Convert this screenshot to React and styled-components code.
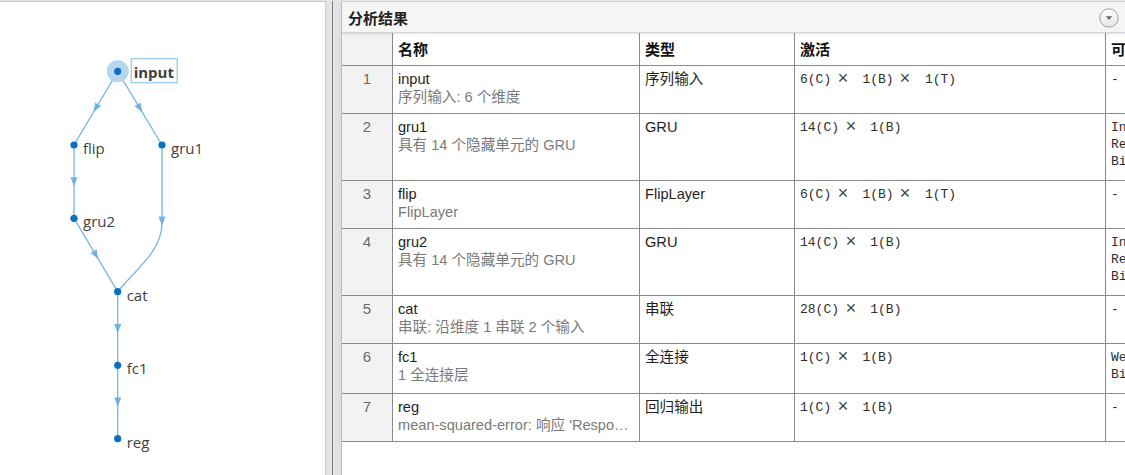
import React from 'react'
import styled, { createGlobalStyle } from 'styled-components'

const GlobalStyle = createGlobalStyle`
  html, body {
    margin: 0;
    padding: 0;
  }
  body {
    background: #e4e4e4;
    font-family: 'Liberation Sans', 'Noto Sans CJK SC', sans-serif;
  }
`

const nodes = [
  { id: 'input', x: 117.7, y: 70.3, selected: true },
  { id: 'flip', x: 74, y: 144 },
  { id: 'gru1', x: 162, y: 144 },
  { id: 'gru2', x: 74, y: 217.3 },
  { id: 'cat', x: 117.7, y: 290.7 },
  { id: 'fc1', x: 117.7, y: 364.3 },
  { id: 'reg', x: 117.7, y: 437.7 }
]

const pos = Object.fromEntries(nodes.map((n) => [n.id, n]))

const straight = (a, b) => {
  const p = pos[a]
  const q = pos[b]
  return {
    d: `M${p.x},${p.y} L${q.x},${q.y}`,
    ax: (p.x + q.x) / 2,
    ay: (p.y + q.y) / 2,
    angle: (Math.atan2(q.y - p.y, q.x - p.x) * 180) / Math.PI
  }
}

const edges = [
  straight('input', 'flip'),
  straight('input', 'gru1'),
  straight('flip', 'gru2'),
  straight('gru2', 'cat'),
  {
    d: 'M162,144 L162,222 C162,250 136,268 117.7,290.7',
    ax: 162,
    ay: 220,
    angle: 90
  },
  straight('cat', 'fc1'),
  straight('fc1', 'reg')
]

const rows = [
  {
    name: 'input',
    desc: '序列输入: 6 个维度',
    type: '序列输入',
    act: ['6(C)', '1(B)', '1(T)'],
    params: ['-']
  },
  {
    name: 'gru1',
    desc: '具有 14 个隐藏单元的 GRU',
    type: 'GRU',
    act: ['14(C)', '1(B)'],
    params: ['InputWeights', 'RecurrentWeights', 'Bias']
  },
  {
    name: 'flip',
    desc: 'FlipLayer',
    type: 'FlipLayer',
    act: ['6(C)', '1(B)', '1(T)'],
    params: ['-']
  },
  {
    name: 'gru2',
    desc: '具有 14 个隐藏单元的 GRU',
    type: 'GRU',
    act: ['14(C)', '1(B)'],
    params: ['InputWeights', 'RecurrentWeights', 'Bias']
  },
  {
    name: 'cat',
    desc: '串联: 沿维度 1 串联 2 个输入',
    type: '串联',
    act: ['28(C)', '1(B)'],
    params: ['-']
  },
  {
    name: 'fc1',
    desc: '1 全连接层',
    type: '全连接',
    act: ['1(C)', '1(B)'],
    params: ['Weights', 'Bias']
  },
  {
    name: 'reg',
    desc: "mean-squared-error: 响应 'Response'",
    type: '回归输出',
    act: ['1(C)', '1(B)'],
    params: ['-']
  }
]

const App = () => {
  return (
    <>
      <GlobalStyle />
      <Page>
        <GraphPanel>
          <Graph width='325' height='474'>
            {edges.map((e, i) => (
              <g key={i}>
                <Edge d={e.d} />
                <Arrow
                  points='4.5,0 -4.5,-3.6 -4.5,3.6'
                  transform={`translate(${e.ax},${e.ay}) rotate(${e.angle})`}
                />
              </g>
            ))}
            {nodes.map((n) => (
              <g key={n.id}>
                {n.selected && <Halo cx={n.x} cy={n.y} r='11' />}
                <Dot cx={n.x} cy={n.y} r='3.6' />
                {n.selected && (
                  <LabelBox x={n.x + 13.5} y={n.y - 12.5} width='46' height='24' />
                )}
                <NodeLabel
                  x={n.x + (n.selected ? 16 : 9)}
                  y={n.y + (n.selected ? 6.5 : 9)}
                  $bold={n.selected}
                >
                  {n.id}
                </NodeLabel>
              </g>
            ))}
          </Graph>
        </GraphPanel>
        <Splitter />
        <ResultPanel>
          <PanelHeader>
            <PanelTitle>分析结果</PanelTitle>
            <CollapseButton>
              <svg width='22' height='22' viewBox='0 0 22 22'>
                <defs>
                  <linearGradient id='btn' x1='0' y1='0' x2='0' y2='1'>
                    <stop offset='0' stopColor='#ffffff' />
                    <stop offset='1' stopColor='#e6e6e6' />
                  </linearGradient>
                </defs>
                <circle cx='11' cy='11' r='9.2' fill='url(#btn)' stroke='#a0a0a0' strokeWidth='1' />
                <polygon points='7.8,9.2 14.2,9.2 11,13' fill='#6a6a6a' />
              </svg>
            </CollapseButton>
          </PanelHeader>
          <Table>
            <HeadRow>
              <IndexCell />
              <HeadCell>名称</HeadCell>
              <HeadCell>类型</HeadCell>
              <HeadCell>激活</HeadCell>
              <HeadCell>可学习参数</HeadCell>
            </HeadRow>
            {rows.map((r, i) => (
              <Row key={r.name}>
                <IndexCell>{i + 1}</IndexCell>
                <Cell>
                  <LayerName>{r.name}</LayerName>
                  <LayerDesc>{r.desc}</LayerDesc>
                </Cell>
                <Cell>{r.type}</Cell>
                <MonoCell>
                  {r.act.map((a, k) => (
                    <React.Fragment key={k}>
                      {k > 0 && (
                        <>
                          {' '}
                          <Times>×</Times>
                          {'  '}
                        </>
                      )}
                      {a}
                    </React.Fragment>
                  ))}
                </MonoCell>
                <MonoCell>
                  {r.params.map((p) => (
                    <div key={p}>{p}</div>
                  ))}
                </MonoCell>
              </Row>
            ))}
          </Table>
        </ResultPanel>
      </Page>
    </>
  )
}

const Page = styled.div`
  display: flex;
  height: 475px;
  padding-top: 1px;
  box-sizing: border-box;
  overflow: hidden;
`

const GraphPanel = styled.section`
  position: relative;
  width: 326px;
  flex: none;
  box-sizing: border-box;
  background: #ffffff;
  border-top: 1px solid #c8c8c8;
  border-right: 1px solid #d2d2d2;
`

const Graph = styled.svg`
  position: absolute;
  left: 0;
  top: -1px;
`

const Edge = styled.path`
  fill: none;
  stroke: #76b6e4;
  stroke-width: 1.3;
`

const Arrow = styled.polygon`
  fill: #62a9de;
  opacity: 0.85;
`

const Halo = styled.circle`
  fill: #b6d6ee;
`

const Dot = styled.circle`
  fill: #0b6fc0;
`

const LabelBox = styled.rect`
  fill: #ffffff;
  stroke: #7fbbe4;
  stroke-width: 1;
`

const NodeLabel = styled.text`
  font-family: 'Open Sans', 'Noto Sans', sans-serif;
  font-size: 15px;
  font-weight: ${(p) => (p.$bold ? 700 : 400)};
  fill: #3f3f3f;
`

const Splitter = styled.div`
  width: 15px;
  flex: none;
  background: linear-gradient(
    to right,
    #e2e2e2 0,
    #e6e6e6 6px,
    #7a7a7a 6px,
    #7a7a7a 7px,
    #e6e6e6 7px,
    #dedede 15px
  );
`

const ResultPanel = styled.section`
  flex: 1;
  min-width: 0;
  display: flex;
  flex-direction: column;
  background: #ffffff;
  border-left: 1px solid #bdbdbd;
  border-top: 1px solid #cfcfcf;
  overflow: hidden;
`

const PanelHeader = styled.div`
  display: flex;
  align-items: center;
  justify-content: space-between;
  height: 30px;
  flex: none;
  padding: 0 6px;
  background: #f5f5f5;
  border-bottom: 1px solid #d4d4d4;
  box-shadow: 0 1px 2px rgba(0, 0, 0, 0.12);
  position: relative;
  z-index: 1;
`

const PanelTitle = styled.h2`
  margin: 0;
  font-family: 'Noto Sans CJK SC', sans-serif;
  font-size: 15px;
  font-weight: 700;
  color: #222222;
`

const CollapseButton = styled.div`
  display: flex;
  margin-right: -1px;
  margin-top: 1px;
`

const Table = styled.div`
  display: flex;
  flex-direction: column;
  width: max-content;
`

const Row = styled.div`
  display: grid;
  grid-template-columns: 51px 247px 155px 311px 200px;
  border-bottom: 1px solid #8a8a8a;
  min-height: 47px;
  font-size: 14.6px;
  color: #1e1e1e;
`

const HeadRow = styled(Row)`
  min-height: 32px;
`

const Cell = styled.div`
  box-sizing: border-box;
  border-right: 1px solid #8a8a8a;
  padding: 4px 5px 0;
  line-height: 18px;
  min-width: 0;
`

const IndexCell = styled(Cell)`
  background: #f2f2f2;
  text-align: center;
  font-size: 15px;
  color: #6a6a6a;
`

const HeadCell = styled(Cell)`
  display: flex;
  align-items: center;
  padding-top: 0;
  font-family: 'Noto Sans CJK SC', sans-serif;
  font-size: 15px;
  font-weight: 700;
  color: #111111;
  white-space: nowrap;
  overflow: hidden;
`

const LayerName = styled.div`
  color: #1e1e1e;
`

const LayerDesc = styled.div`
  color: #7a7a7a;
  white-space: nowrap;
  overflow: hidden;
  text-overflow: ellipsis;
`

const MonoCell = styled(Cell)`
  font-family: 'Liberation Mono', 'Noto Sans CJK SC', monospace;
  font-size: 13px;
  line-height: 17px;
  padding-top: 5px;
  padding-bottom: 10px;
  color: #2e2e2e;
  white-space: pre;
`

const Times = styled.span`
  display: inline-block;
  transform: scale(1.4);
  color: #444444;
`

export default App
